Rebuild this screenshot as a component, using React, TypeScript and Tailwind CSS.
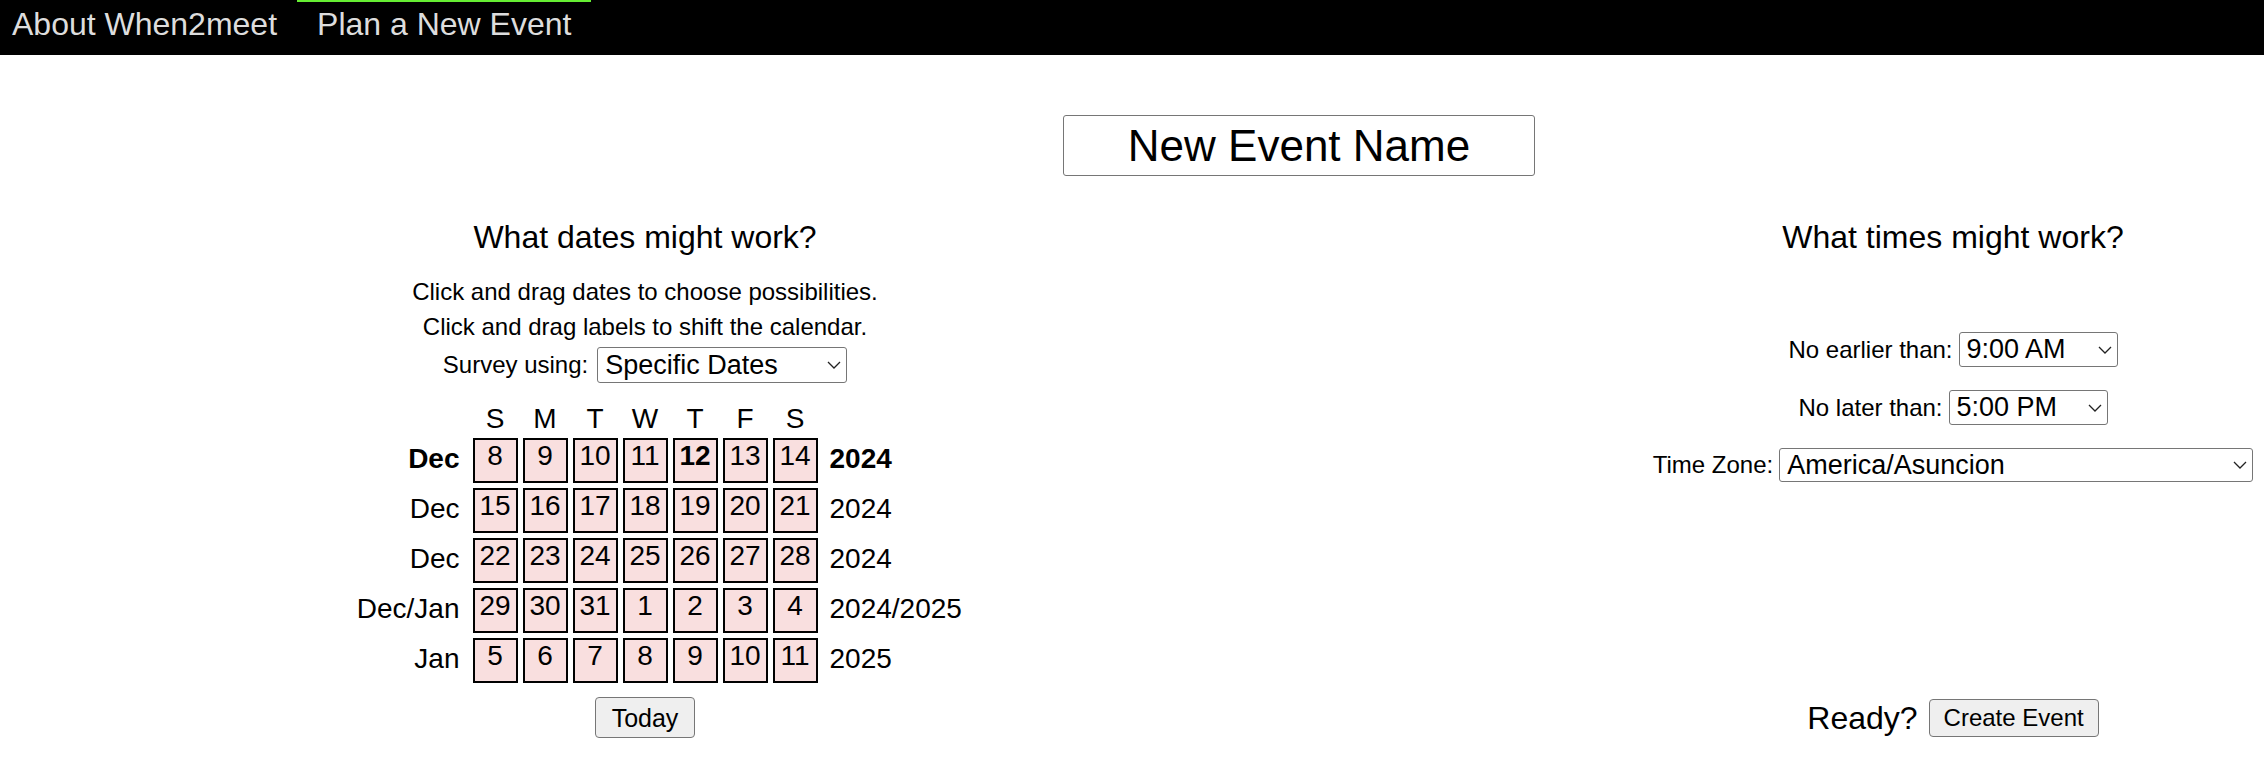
import React from 'react';

const rows = [
  { m: 'Dec', y: '2024', days: [8, 9, 10, 11, 12, 13, 14], bold: true },
  { m: 'Dec', y: '2024', days: [15, 16, 17, 18, 19, 20, 21] },
  { m: 'Dec', y: '2024', days: [22, 23, 24, 25, 26, 27, 28] },
  { m: 'Dec/Jan', y: '2024/2025', days: [29, 30, 31, 1, 2, 3, 4] },
  { m: 'Jan', y: '2025', days: [5, 6, 7, 8, 9, 10, 11] },
];

function Chevron() {
  return (
    <svg width="14" height="8" viewBox="0 0 14 8" className="shrink-0">
      <path d="M1 1l6 6 6-6" stroke="#222" strokeWidth="1.3" fill="none" />
    </svg>
  );
}

function FakeSelect({ value, className }: { value: string; className: string }) {
  return (
    <div className={'flex items-center justify-between border border-[#767676] rounded-[3px] bg-white pl-[7px] pr-[5px] text-[27px] leading-[31px] ' + className}>
      <span>{value}</span>
      <Chevron />
    </div>
  );
}

export default function App() {
  return (
    <div className="w-[2264px] h-[762px] overflow-hidden bg-white text-black font-['Liberation_Sans',Arial,sans-serif]">
      {/* nav */}
      <header className="h-[55px] bg-black flex items-start text-[32px] leading-[37px] text-[#dddddd]">
        <a className="pl-[12px] pt-[6px]">About When2meet</a>
        <a className="ml-[20px] px-[20px] pt-[4px] border-t-[2px] border-[#66ee33]">Plan a New Event</a>
      </header>

      <main>
        <div className="w-[2598px] flex justify-center pt-[60px]">
          <input
            defaultValue="New Event Name"
            className="w-[472px] h-[61px] border border-[#767676] rounded-[3px] text-center text-[44px] outline-none"
          />
        </div>

        <div className="flex w-[2616px] mt-[43px]">
          {/* dates */}
          <section className="w-[1290px] flex flex-col items-center">
            <h2 className="text-[32px] leading-[37px]">What dates might work?</h2>
            <p className="mt-[18px] text-[24px] leading-[35px]">Click and drag dates to choose possibilities.</p>
            <p className="text-[24px] leading-[35px]">Click and drag labels to shift the calendar.</p>
            <div className="mt-[3px] h-[36px] flex items-center text-[24px]">
              <span className="mr-[9px]">Survey using:</span>
              <FakeSelect value="Specific Dates" className="w-[250px] h-[36px]" />
            </div>

            <div className="mt-[20px] grid grid-cols-[150px_repeat(7,45px)_150px] gap-x-[5px] mb-[3px] text-[28px] leading-[32px] text-center">
              <div />
              {['S', 'M', 'T', 'W', 'T', 'F', 'S'].map((d, i) => (
                <div key={i}>{d}</div>
              ))}
              <div />
            </div>
            <div className="grid grid-cols-[150px_repeat(7,45px)_150px] gap-[5px] text-[28px]">
              {rows.map((r, ri) => (
                <React.Fragment key={ri}>
                  <div className={'text-right pr-[8px] leading-[41px] ' + (r.bold ? 'font-bold' : '')}>{r.m}</div>
                  {r.days.map((d) => (
                    <div
                      key={d}
                      className={'h-[45px] border-2 border-black bg-[#f9dfdf] text-center leading-[32px] ' + (ri === 0 && d === 12 ? 'font-bold' : '')}
                    >
                      {d}
                    </div>
                  ))}
                  <div className={'pl-[7px] leading-[41px] whitespace-nowrap ' + (r.bold ? 'font-bold' : '')}>{r.y}</div>
                </React.Fragment>
              ))}
            </div>
            <button className="mt-[14px] h-[41px] px-[16px] border border-[#767676] bg-[#efefef] rounded-[4px] text-[25px] leading-[28px]">
              Today
            </button>
          </section>

          {/* times */}
          <section className="w-[1326px] flex flex-col items-center text-[24px]">
            <h2 className="text-[32px] leading-[37px]">What times might work?</h2>
            <div className="mt-[76px] h-[35px] flex items-center">
              <span className="mr-[6px]">No earlier than:</span>
              <FakeSelect value="9:00 AM" className="w-[159px] h-[35px]" />
            </div>
            <div className="mt-[23px] h-[35px] flex items-center">
              <span className="mr-[6px]">No later than:</span>
              <FakeSelect value="5:00 PM" className="w-[159px] h-[35px]" />
            </div>
            <div className="mt-[23px] h-[34px] flex items-center">
              <span className="mr-[6px]">Time Zone:</span>
              <FakeSelect value="America/Asuncion" className="w-[474px] h-[34px]" />
            </div>
            <div className="mt-[217px] flex items-center">
              <span className="text-[32px] leading-[37px] mr-[11px]">Ready?</span>
              <button className="h-[38px] w-[170px] border border-[#767676] bg-[#efefef] rounded-[4px] text-[24px] leading-[28px]">
                Create Event
              </button>
            </div>
          </section>
        </div>
      </main>
    </div>
  );
}
